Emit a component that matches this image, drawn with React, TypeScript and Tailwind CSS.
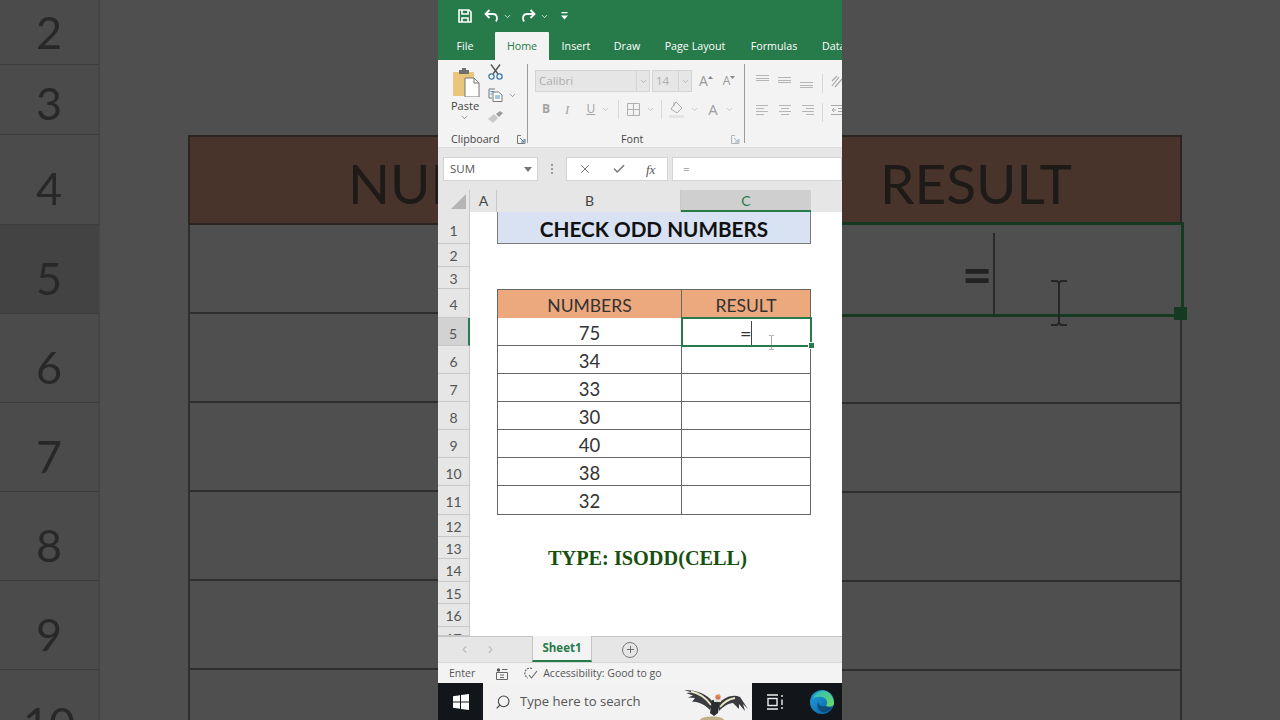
import { ChevronDown, Check, X, Search, Plus, ChevronLeft, ChevronRight } from 'lucide-react';

const sheetRows = [
  { n: 1, h: 32 }, { n: 2, h: 23 }, { n: 3, h: 22 }, { n: 4, h: 29 }, { n: 5, h: 28 }, { n: 6, h: 28 },
  { n: 7, h: 28 }, { n: 8, h: 28 }, { n: 9, h: 28 }, { n: 10, h: 28 }, { n: 11, h: 29 }, { n: 12, h: 22 },
  { n: 13, h: 22 }, { n: 14, h: 23 }, { n: 15, h: 22 }, { n: 16, h: 23 }, { n: 17, h: 9 },
];

const numbers: Record<number, string> = { 5: '75', 6: '34', 7: '33', 8: '30', 9: '40', 10: '38', 11: '32' };

const leftRows = [
  { n: 2, h: 65 }, { n: 3, h: 70 }, { n: 4, h: 90 }, { n: 5, h: 89 }, { n: 6, h: 89 },
  { n: 7, h: 89 }, { n: 8, h: 89 }, { n: 9, h: 89 }, { n: 10, h: 89 },
];

function Chev({ className = '' }: { className?: string }) {
  return <ChevronDown strokeWidth={2} className={`w-[9px] h-[9px] shrink-0 text-[#777] ${className}`} />;
}

function IBeam({ w, h, stroke }: { w: number; h: number; stroke: string }) {
  return (
    <svg width={w} height={h} viewBox="0 0 20 46" fill="none" stroke={stroke} strokeWidth="2">
      <path d="M2 1 H8 L10 3 L12 1 H18 M10 3 V43 M2 45 H8 L10 43 L12 45 H18" />
    </svg>
  );
}

function LeftPanel() {
  return (
    <div className="w-[438px] h-[720px] shrink-0 bg-[#4f4f4f] overflow-hidden font-['Lato'] blur-[0.4px]">
      {leftRows.map((r) => (
        <div key={r.n} className="flex" style={{ height: r.h }}>
          <div className={`w-[100px] shrink-0 flex items-center justify-center border-b border-r-2 border-b-[#3d3d3d] border-r-[#454545] text-[45px] leading-none text-[#282828] ${r.n === 5 ? 'bg-[#434343] border-r-[#123f22]' : 'bg-[#4b4b4b]'} ${r.n === 3 ? 'pt-[8px]' : ''} ${r.n >= 4 ? 'pt-[18px]' : ''}`}>
            {r.n}
          </div>
          {r.n === 4 && (
            <div className="ml-[88px] flex-1 bg-[#48342a] border-t-2 border-l-2 border-b-2 border-[#2b2522] flex items-center pt-[6px] pl-[158px] text-[55px] leading-none text-[#1d1a18] overflow-hidden whitespace-nowrap">
              NUMBERS
            </div>
          )}
          {r.n > 4 && <div className="ml-[88px] flex-1 border-l-2 border-b-2 border-[#2e2e2e]" />}
        </div>
      ))}
    </div>
  );
}

function RightPanel() {
  return (
    <div className="w-[438px] h-[720px] shrink-0 bg-[#4f4f4f] overflow-hidden font-['Lato'] blur-[0.4px]">
      <div className="h-[135px]" />
      <div className="h-[87px] w-[340px] bg-[#48342a] border-t-2 border-r-2 border-[#2b2522] flex items-center pt-[7px] pl-[38px] text-[55px] leading-none text-[#1d1a18]">
        RESULT
      </div>
      <div className="relative h-[95px] w-[342px] border-t-[3px] border-b-[3px] border-r-[3px] border-[#143a22] flex items-center">
        <span className="ml-[120px] pt-[6px] text-[52px] font-bold leading-none text-[#222]">=</span>
        <div className="absolute left-[151px] top-[8px] bottom-0 w-[2px] bg-[#2a2a2a]" />
        <div className="absolute left-[207px] top-[55px]">
          <IBeam w={20} h={46} stroke="#262626" />
        </div>
        <div className="absolute -right-[6px] -bottom-[6px] w-[13px] h-[13px] bg-[#143a22]" />
      </div>
      {[87, 89, 89, 89].map((h, i) => (
        <div key={i} className="w-[340px] border-r-2 border-b-2 border-[#2e2e2e]" style={{ height: h }} />
      ))}
      <div className="h-[50px] w-[340px] border-r-2 border-[#2e2e2e]" />
    </div>
  );
}

function TitleBar() {
  return (
    <div className="h-[32px] bg-[#277a4a] flex items-center text-white">
      <svg className="ml-[20px]" width="14" height="14" viewBox="0 0 14 14" fill="none" stroke="white" strokeWidth="1.6">
        <path d="M1 1 H11 L13 3 V13 H1 Z" />
        <path d="M4 1 V5 H10 V1 M4 13 V9 H10 V13" />
      </svg>
      <svg className="ml-[12px]" width="15" height="14" viewBox="0 0 15 14" fill="none" stroke="white" strokeWidth="1.8">
        <path d="M5.5 1 L1.5 5 L5.5 9" />
        <path d="M2 5 H9 C13 5 14 9 12 12.5" />
      </svg>
      <Chev className="ml-[4px] !text-white" />
      <svg className="ml-[9px]" width="15" height="14" viewBox="0 0 15 14" fill="none" stroke="white" strokeWidth="1.8">
        <path d="M9.5 1 L13.5 5 L9.5 9" />
        <path d="M13 5 H6 C2 5 1 9 3 12.5" />
      </svg>
      <Chev className="ml-[4px] !text-white" />
      <svg className="ml-[12px]" width="7" height="8" viewBox="0 0 7 8" fill="white">
        <rect x="0.5" y="0" width="6" height="1.3" />
        <path d="M0 3.5 H7 L3.5 7.5 Z" />
      </svg>
    </div>
  );
}

function TabRow() {
  const tabs = [
    { label: 'Insert', w: 54 }, { label: 'Draw', w: 48 }, { label: 'Page Layout', w: 88 }, { label: 'Formulas', w: 70 },
  ];
  return (
    <div className="h-[28px] bg-[#277a4a] flex text-[10.7px] text-white font-['Open_Sans'] whitespace-nowrap overflow-hidden">
      <div className="w-[57px] shrink-0 flex items-center justify-center pr-[3px]">File</div>
      <div className="w-[54px] shrink-0 bg-[#f3f3f3] flex items-center justify-center text-[#277a4a] rounded-t-[1px]">Home</div>
      {tabs.map((t) => (
        <div key={t.label} className="flex items-center justify-center shrink-0" style={{ width: t.w }}>{t.label}</div>
      ))}
      <div className="flex items-center pl-[13px] shrink-0">Data</div>
    </div>
  );
}

function PasteIcon() {
  return (
    <svg width="28" height="30" viewBox="0 0 28 30">
      <rect x="1" y="5" width="21" height="24" rx="1" fill="#e9c67b" />
      <path d="M7 5 V3 H10 V1 H14 V3 H17 V5 V7 H7 Z" fill="#6f6f6f" />
      <path d="M13 11 H22 L27 16 V30 H13 Z" fill="white" stroke="#777" strokeWidth="1" />
      <path d="M22 11 V16 H27" fill="none" stroke="#777" strokeWidth="1" />
    </svg>
  );
}

function ScissorsIcon() {
  return (
    <svg width="15" height="16" viewBox="0 0 15 16" fill="none">
      <path d="M3 0.500 L10 10 M12 0.500 L5 10" stroke="#555" strokeWidth="1.4" />
      <circle cx="3.500" cy="12.500" r="2.600" stroke="#3f79ad" strokeWidth="1.3" />
      <circle cx="11.500" cy="12.500" r="2.600" stroke="#3f79ad" strokeWidth="1.3" />
    </svg>
  );
}

function CopyIcon() {
  return (
    <svg width="15" height="14" viewBox="0 0 15 14" fill="none" stroke="#777" strokeWidth="1">
      <path d="M7 1 H1 V10 H4" />
      <path d="M5 4 H10.5 L14 7 V13.5 H5 Z" fill="#fff" />
      <path d="M7 8 H12 M7 10 H12 M2.5 3.5 H6 M2.5 6 H4" stroke="#4a8ec9" />
    </svg>
  );
}

function PainterIcon() {
  return (
    <svg width="16" height="13" viewBox="0 0 16 13">
      <path d="M0 9 L6 4 L10 8 L5 13 Z" fill="#c9c9c9" />
      <path d="M8 4 L12 1 L15 3 L11 7 Z" fill="#9c9c9c" />
    </svg>
  );
}

function Launcher({ className = '' }: { className?: string }) {
  return (
    <svg className={className} width="9" height="9" viewBox="0 0 9 9" fill="none" stroke="#777" strokeWidth="1">
      <path d="M8 4 V8.5 H0.5 V0.5 H4" />
      <path d="M3 3 L7 7 M4 7 H7 V4" stroke="#4f7fa6" />
    </svg>
  );
}

function AlignLines({ kind }: { kind: 'top' | 'mid' | 'bot' | 'left' | 'center' | 'right' }) {
  const sets: Record<string, number[][]> = {
    top: [[1, 13], [4, 13], [6, 13]],
    mid: [[3, 13], [6, 13], [8, 13]],
    bot: [[8, 13], [11, 13], [13, 13]],
    left: [[2, 12], [5, 8], [8, 12], [11, 8]],
    center: [[2, 12], [5, 8], [8, 12], [11, 8]],
    right: [[2, 12], [5, 8], [8, 12], [11, 8]],
  };
  return (
    <svg width="14" height="15" viewBox="0 0 14 15" stroke="#b5b5b5" strokeWidth="1">
      {sets[kind].map(([y, w], i) => {
        const x = kind === 'center' ? (14 - w) / 2 : kind === 'right' ? 14 - w : 0;
        return <line key={i} x1={x} x2={x + w} y1={y + 0.5} y2={y + 0.5} />;
      })}
    </svg>
  );
}

function Ribbon() {
  return (
    <div className="h-[88px] bg-[#f3f3f3] border-b border-[#dcdcdc] flex text-[#5e5e5e] font-['Open_Sans'] overflow-hidden">
      {/* Clipboard */}
      <div className="w-[90px] shrink-0 mt-[4px] h-[79px] border-r border-[#9a9a9a] flex flex-col">
        <div className="flex h-[64px] shrink-0">
          <div className="w-[46px] pl-[14px] pt-[3px] flex flex-col items-start">
            <PasteIcon />
            <div className="text-[11px] leading-[14px] mt-[2px] text-[#444] -ml-[1px]">Paste</div>
            <Chev className="ml-[8px]" />
          </div>
          <div className="flex flex-col pl-[4px]">
            <ScissorsIcon />
            <div className="flex items-center mt-[8px]">
              <CopyIcon />
              <Chev className="ml-[5px]" />
            </div>
            <div className="mt-[8px]"><PainterIcon /></div>
          </div>
        </div>
        <div className="flex shrink-0 items-center justify-between pl-[13px] pr-[1px] mt-[6px] text-[10.7px] text-[#444] leading-none">
          <span>Clipboard</span>
          <Launcher />
        </div>
      </div>
      {/* Font */}
      <div className="w-[217px] shrink-0 mt-[4px] h-[79px] border-r border-[#9a9a9a] flex flex-col pl-[7px]">
        <div className="flex shrink-0 items-center mt-[6px] h-[22px]">
          <div className="w-[115px] h-[22px] bg-[#e6e6e6] border border-[#d4d4d4] flex items-center justify-between text-[11.5px] text-[#adadad] pl-[3px]">
            <span>Calibri</span>
            <span className="w-[13px] h-full border-l border-[#d4d4d4] flex items-center justify-center"><Chev className="!text-[#aaa]" /></span>
          </div>
          <div className="w-[40px] h-[22px] ml-[2px] bg-[#e6e6e6] border border-[#d4d4d4] flex items-center justify-between text-[11.5px] text-[#adadad] pl-[3px]">
            <span>14</span>
            <span className="w-[13px] h-full border-l border-[#d4d4d4] flex items-center justify-center"><Chev className="!text-[#aaa]" /></span>
          </div>
          <span className="ml-[7px] text-[14px] leading-none text-[#9a9a9a]">A</span>
          <svg className="mb-[8px]" width="5" height="3" viewBox="0 0 5 3" fill="#888"><path d="M0 3 L2.500 0 L5 3 Z" /></svg>
          <span className="ml-[10px] text-[12px] leading-none text-[#9a9a9a]">A</span>
          <svg className="mb-[8px]" width="5" height="3" viewBox="0 0 5 3" fill="#888"><path d="M0 0 L2.500 3 L5 0 Z" /></svg>
        </div>
        <div className="flex shrink-0 items-center mt-[6px] h-[22px] text-[#a3a3a3] text-[12px] leading-none">
          <span className="ml-[7px] font-bold">B</span>
          <span className="ml-[15px] italic font-['Liberation_Serif'] text-[13px]">I</span>
          <span className="ml-[17px] underline">U</span>
          <Chev className="ml-[6px] !text-[#b5b5b5]" />
          <div className="w-px h-[19px] bg-[#d8d8d8] ml-[8px]" />
          <svg className="ml-[8px]" width="13" height="13" viewBox="0 0 13 13" fill="none" stroke="#b0b0b0" strokeWidth="1">
            <path d="M.5.5 H12.5 V12.5 H.5 Z M6.5.5 V12.5 M.5 6.5 H12.5" />
          </svg>
          <Chev className="ml-[6px] !text-[#b5b5b5]" />
          <div className="w-px h-[19px] bg-[#d8d8d8] ml-[6px]" />
          <svg className="ml-[7px]" width="16" height="17" viewBox="0 0 16 17" fill="none" stroke="#aaa" strokeWidth="1">
            <path d="M7 1 L13 7 L8 12 L2 8 Z" />
            <path d="M5 1 V5" />
            <rect x="0" y="14" width="15" height="3" fill="#e3e3e3" stroke="none" />
          </svg>
          <Chev className="ml-[5px] !text-[#b5b5b5]" />
          <span className="ml-[9px] text-[15px] text-[#a0a0a0]">A</span>
          <Chev className="ml-[7px] !text-[#b5b5b5]" />
        </div>
        <div className="flex shrink-0 items-center justify-between pr-[4px] mt-[14px] text-[10.7px] text-[#444] leading-none">
          <span className="ml-[86px]">Font</span>
          <Launcher className="opacity-50" />
        </div>
      </div>
      {/* Alignment, cut by the frame */}
      <div className="flex flex-col pl-[11px] pt-[14px]">
        <div className="flex items-start gap-[8px] h-[24px]">
          <AlignLines kind="top" />
          <AlignLines kind="mid" />
          <AlignLines kind="bot" />
          <div className="w-px h-[19px] bg-[#d8d8d8]" />
          <svg width="14" height="16" viewBox="0 0 14 16" fill="none" stroke="#a8a8a8" strokeWidth="1.2">
            <path d="M1 12 L8 3 M4 13 L11 5 M1 7 L6 2" />
          </svg>
        </div>
        <div className="flex items-start gap-[8px] mt-[5px]">
          <AlignLines kind="left" />
          <AlignLines kind="center" />
          <AlignLines kind="right" />
          <div className="w-px h-[19px] bg-[#d8d8d8]" />
          <svg width="14" height="15" viewBox="0 0 14 15" fill="none" stroke="#a8a8a8" strokeWidth="1">
            <path d="M0 2.500 H14 M7 5.500 H14 M7 8.500 H14 M0 11.500 H14 M5 7 H1 M3 5 L1 7 L3 9" />
          </svg>
        </div>
      </div>
    </div>
  );
}

function FormulaBar() {
  return (
    <div className="h-[42px] bg-[#e6e6e6] flex pl-[5px] pt-[9px] font-['Open_Sans'] text-[11.5px] leading-none text-[#555]">
      <div className="w-[95px] h-[24px] bg-white border border-[#d4d4d4] flex items-center justify-between pl-[6px] pr-[5px]">
        <span>SUM</span>
        <svg width="8" height="5" viewBox="0 0 8 5" fill="#777"><path d="M0 0 H8 L4 5 Z" /></svg>
      </div>
      <div className="w-[28px] h-[24px] flex flex-col items-center justify-center gap-[2px]">
        <span className="w-[2px] h-[2px] bg-[#9a9a9a]" />
        <span className="w-[2px] h-[2px] bg-[#9a9a9a]" />
        <span className="w-[2px] h-[2px] bg-[#9a9a9a]" />
      </div>
      <div className="w-[102px] h-[24px] bg-white border border-[#d4d4d4] flex items-center pl-[11px]">
        <X strokeWidth={1.5} className="w-[14px] h-[14px] text-[#666]" />
        <Check strokeWidth={2.5} className="w-[14px] h-[14px] ml-[20px] text-[#777]" />
        <span className="ml-[20px] italic font-['Liberation_Serif'] text-[13px] text-[#555]">fx</span>
      </div>
      <div className="flex-1 h-[24px] ml-[4px] bg-white border border-[#d4d4d4] flex items-center pl-[10px] text-[#666]">=</div>
    </div>
  );
}

function ColumnHeader() {
  return (
    <div className="h-[22px] flex bg-[#e6e6e6] text-[14px] leading-none text-[#444] font-['Lato']">
      <div className="w-[32px] shrink-0 border-r border-[#c8c8c8] flex items-end justify-end pr-[3px] pb-[3px]">
        <svg width="15" height="15" viewBox="0 0 15 15" fill="#b4b4b4"><path d="M15 0 V15 H0 Z" /></svg>
      </div>
      <div className="w-[27px] shrink-0 border-r border-[#c8c8c8] flex items-center justify-center pl-[1px]">A</div>
      <div className="w-[184px] shrink-0 border-r border-[#c8c8c8] flex items-center justify-center pl-[2px]">B</div>
      <div className="w-[130px] shrink-0 bg-[#cfcfcf] border-b-2 border-[#277a4a] flex items-center justify-center text-[#277a4a] pt-[1px]">C</div>
      <div className="flex-1" />
    </div>
  );
}

function SheetRow({ n, h }: { n: number; h: number }) {
  const isTable = n >= 4 && n <= 11;
  let cells = <div className="w-[341px]" />;
  if (n === 1) {
    cells = (
      <div className="ml-[27px] w-[314px] bg-[#d9e2f3] border-b border-l border-r border-[#7a7a7a] flex items-center justify-center pt-[3px] text-[20.7px] leading-none font-bold text-[#111]">
        CHECK ODD NUMBERS
      </div>
    );
  } else if (n === 4) {
    cells = (
      <div className="ml-[27px] flex bg-[#eda97e] border border-b-0 border-[#666] text-[17.5px] leading-none text-[#333]">
        <div className="w-[184px] border-r border-[#666] flex items-center justify-center pt-[4px]">NUMBERS</div>
        <div className="w-[128px] flex items-center justify-center pt-[4px]">RESULT</div>
      </div>
    );
  } else if (isTable) {
    cells = (
      <div className="ml-[27px] flex bg-white border-l border-r border-b border-[#666] text-[18.5px] leading-none text-[#333]">
        <div className="w-[184px] border-r border-[#666] flex items-center justify-center pt-[3px]">{numbers[n]}</div>
        <div className="w-[128px] flex items-center" />
      </div>
    );
  }
  const labelPad = n === 1 ? 'pt-[6px]' : n === 17 ? 'pt-[5px] items-start' : h >= 28 ? 'pt-[4px]' : 'pt-[2px]';
  return (
    <div className="flex shrink-0 font-['Lato']" style={{ height: h }}>
      <div className={`w-[32px] shrink-0 flex items-center justify-center overflow-hidden text-[14px] leading-none text-[#555] border-b border-r ${labelPad} ${n === 5 ? 'bg-[#d2d2d2] border-r-2 border-r-[#277a4a] border-b-[#c8c8c8]' : 'bg-[#e6e6e6] border-[#c8c8c8]'}`}>
        {n}
      </div>
      {cells}
    </div>
  );
}

function Sheet() {
  return (
    <div className="relative h-[424px] bg-white overflow-hidden">
      {sheetRows.map((r) => (
        <SheetRow key={r.n} n={r.n} h={r.h} />
      ))}
      {/* active cell C5 */}
      <div className="absolute left-[243px] top-[105px] w-[131px] h-[30px] border-2 border-[#277a4a] flex items-center font-['Lato'] text-[20px] leading-none text-[#333]">
        <span className="ml-[57px] pt-[2px]">=</span>
        <span className="absolute left-[68px] top-[2px] bottom-0 w-px bg-[#444]" />
      </div>
      <div className="absolute left-[370px] top-[130px] w-[5px] h-[5px] bg-[#277a4a] border border-white box-content" />
      <div className="absolute left-[330px] top-[123px]">
        <IBeam w={7} h={15} stroke="#777" />
      </div>
      {/* floating text box */}
      <div className="absolute left-[110px] top-[334px] font-['Liberation_Serif'] font-bold text-[20.3px] leading-[24px] text-[#17500f] whitespace-nowrap">
        TYPE: ISODD(CELL)
      </div>
    </div>
  );
}

function SheetTabs() {
  return (
    <div className="h-[26px] bg-[#e6e6e6] border-t border-[#c4c4c4] flex font-['Open_Sans']">
      <div className="w-[94px] flex items-center pl-[21px] gap-[15px]">
        <ChevronLeft strokeWidth={3} className="w-[11px] h-[11px] text-[#c0c0c0]" />
        <ChevronRight strokeWidth={3} className="w-[11px] h-[11px] text-[#c0c0c0]" />
      </div>
      <div className="w-[60px] -mt-px bg-[#f3f3f3] border-l border-r border-[#c4c4c4] border-b-2 border-b-[#277a4a] flex items-center justify-center text-[11.5px] leading-none font-bold text-[#277a4a]">
        Sheet1
      </div>
      <div className="ml-[30px] self-center w-[16px] h-[16px] rounded-full border border-[#777] flex items-center justify-center">
        <Plus strokeWidth={2} className="w-[11px] h-[11px] text-[#666]" />
      </div>
    </div>
  );
}

function StatusBar() {
  return (
    <div className="h-[21px] bg-[#f3f3f3] border-t border-[#d6d6d6] flex items-center pt-[1px] text-[10.5px] text-[#555] font-['Open_Sans']">
      <span className="ml-[11px]">Enter</span>
      <svg className="ml-[21px]" width="12" height="12" viewBox="0 0 12 12" fill="none" stroke="#666">
        <circle cx="2.500" cy="2" r="1.700" fill="#555" stroke="none" />
        <path d="M6 1.500 H11.500 M.5 4.500 H11.500 V11.500 H.5 Z M4 7 H8 M4 9.500 H8" />
      </svg>
      <svg className="ml-[15px]" width="15" height="13" viewBox="0 0 15 13" fill="none" stroke="#666" strokeWidth="1.1">
        <path d="M9 1.500 A5 5 0 1 0 5 11" strokeDasharray="2 1" />
        <path d="M6 8 L8.500 11 L14 4" />
      </svg>
      <span className="ml-[5px]">Accessibility: Good to go</span>
    </div>
  );
}

function Bird() {
  return (
    <svg width="68" height="37" viewBox="0 0 68 37">
      <ellipse cx="29" cy="37" rx="12" ry="3.500" fill="#bfae86" />
      {/* wings */}
      <path d="M30 19 C24 11 14 7 1 7 L9 9.500 L3 10 L10 12.500 L5 14.500 L12 15 L9 19 C15 18 22 22 27 27 Z" fill="#3a3c40" />
      <path d="M36 20 C42 14 50 11 57 14 L65 26 L60 21 L62 28 L56 21 L56 26 L50 20 C45 20 40 24 36 28 Z" fill="#3a3c40" />
      <path d="M8 8.500 C16 10 23 15 28 22 M37 24 C41 19 46 16 52 15" stroke="#ece8c8" strokeWidth="1.800" fill="none" />
      {/* body and head */}
      <path d="M29 17 L37 18 L35 30 L31 33 L27 30 Z" fill="#2b2c30" />
      <path d="M31 16 H38 V19 H31 Z" fill="#e3e0cf" />
      <circle cx="35" cy="14" r="2.600" fill="#d9745a" />
      <circle cx="36" cy="12.500" r="1.200" fill="#e8a13c" />
    </svg>
  );
}

function EdgeIcon() {
  return (
    <svg width="24" height="24" viewBox="0 0 24 24">
      <defs>
        <linearGradient id="edgeBlue" x1="0" y1="0" x2="1" y2="1">
          <stop offset="0" stopColor="#1fa0d8" />
          <stop offset="1" stopColor="#0b5fa8" />
        </linearGradient>
        <linearGradient id="edgeGreen" x1="0" y1="0" x2="1" y2="1">
          <stop offset="0" stopColor="#2cb8c4" />
          <stop offset="1" stopColor="#6fdc5f" />
        </linearGradient>
      </defs>
      <circle cx="12" cy="12" r="12" fill="url(#edgeBlue)" />
      <path d="M3 9 C5 2 12 0 16 1 C21 3 24 8 24 13 C24 17 19 17 16 16 C19 12 16 8 12 7 C8 6.500 5 7 3 9 Z" fill="url(#edgeGreen)" />
      <path d="M16 16 C11 17 8 15 9 12 C6 14 7 20 12 22 C15 23 20 21 23 17 C21 18 18 17 16 16 Z" fill="#0d2c4a" opacity="0.55" />
    </svg>
  );
}

function Taskbar() {
  return (
    <div className="h-[37px] bg-[#12161b] flex font-['Open_Sans']">
      <div className="w-[45px] flex items-center justify-center">
        <svg width="16" height="16" viewBox="0 0 16 16" fill="white">
          <path d="M0 2.300 L7 1.300 V7.500 H0 Z M8 1.100 L16 0 V7.500 H8 Z M0 8.500 H7 V14.700 L0 13.700 Z M8 8.500 H16 V16 L8 14.900 Z" />
        </svg>
      </div>
      <div className="w-[269px] bg-[#f2f2f2] flex items-center overflow-hidden">
        <Search strokeWidth={1.6} className="ml-[12px] w-[16px] h-[16px] -scale-x-100 text-[#444]" />
        <span className="ml-[9px] text-[13.1px] text-[#555] whitespace-nowrap">Type here to search</span>
        <div className="ml-auto mr-[1px] shrink-0 self-end"><Bird /></div>
      </div>
      <div className="flex-1 flex items-center">
        <svg className="ml-[15px]" width="17" height="16" viewBox="0 0 17 16" fill="none" stroke="#eee" strokeWidth="1.4">
          <path d="M0 1 H11 M0 15 H11" />
          <rect x="1" y="4.500" width="9" height="7" />
          <path d="M15 1 V3 M15 5.500 V11 M15 13 V15" />
        </svg>
        <div className="ml-[26px]"><EdgeIcon /></div>
      </div>
    </div>
  );
}

export default function App() {
  return (
    <div className="w-[1280px] h-[720px] flex overflow-hidden bg-[#4f4f4f]">
      <LeftPanel />
      <div className="w-[404px] h-[720px] shrink-0 flex flex-col overflow-hidden">
        <TitleBar />
        <TabRow />
        <Ribbon />
        <FormulaBar />
        <ColumnHeader />
        <Sheet />
        <SheetTabs />
        <StatusBar />
        <Taskbar />
      </div>
      <RightPanel />
    </div>
  );
}
